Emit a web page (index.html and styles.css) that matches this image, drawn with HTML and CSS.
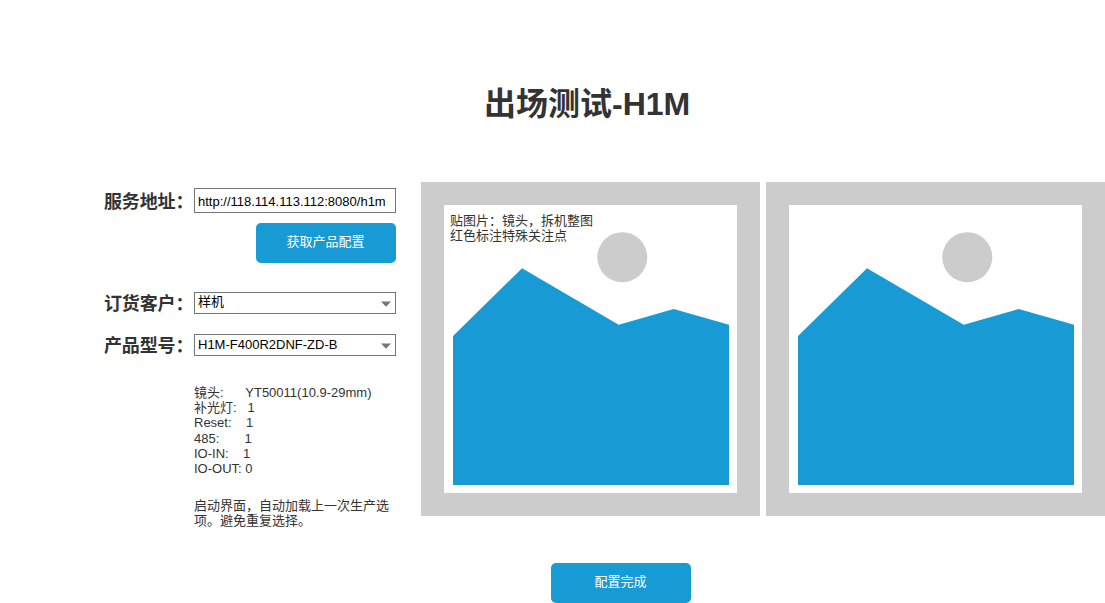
FILE: index.html
```html
<!DOCTYPE html>
<html lang="zh-CN">
<head>
<meta charset="utf-8">
<title>出场测试-H1M</title>
<link rel="stylesheet" href="styles.css">
</head>
<body>
<main class="page">
  <h1 class="title">出场测试-H1M</h1>
  <div class="content">
    <section class="form">
      <div class="field field-address">
        <label class="label" for="address">服务地址：</label>
        <input class="input" id="address" type="text" value="http://118.114.113.112:8080/h1m">
      </div>
      <button class="button fetch" type="button">获取产品配置</button>
      <div class="field field-customer">
        <span class="label">订货客户：</span>
        <div class="select"><span class="select-text">样机</span><svg class="arrow" width="10" height="6" viewBox="0 0 10 6"><path d="M0 0.5H10L5 5.8Z" fill="#767676"/></svg></div>
      </div>
      <div class="field field-model">
        <span class="label">产品型号：</span>
        <div class="select"><span class="select-text latin">H1M-F400R2DNF-ZD-B</span><svg class="arrow" width="10" height="6" viewBox="0 0 10 6"><path d="M0 0.5H10L5 5.8Z" fill="#767676"/></svg></div>
      </div>
      <div class="specs">
        <div class="spec">镜头:      YT50011(10.9-29mm)</div>
        <div class="spec">补光灯:   1</div>
        <div class="spec">Reset:    1</div>
        <div class="spec">485:       1</div>
        <div class="spec">IO-IN:    1</div>
        <div class="spec">IO-OUT: 0</div>
      </div>
      <p class="hint">启动界面，自动加载上一次生产选<br>项。避免重复选择。</p>
    </section>
    <section class="gallery">
      <div class="picture">
        <svg class="art" width="293" height="288" viewBox="0 0 293 288"><circle cx="178.3" cy="52.2" r="25" fill="#ccc"/><path d="M9 131L78 63.2L174.7 119.7L229.7 104L285 119.7V280H9Z" fill="#189bd5"/></svg>
        <p class="note">贴图片：镜头，拆机整图<br>红色标注特殊关注点</p>
      </div>
      <div class="picture">
        <svg class="art" width="293" height="288" viewBox="0 0 293 288"><circle cx="178.3" cy="52.2" r="25" fill="#ccc"/><path d="M9 131L78 63.2L174.7 119.7L229.7 104L285 119.7V280H9Z" fill="#189bd5"/></svg>
      </div>
    </section>
  </div>
  <button class="button done" type="button">配置完成</button>
</main>
</body>
</html>
```
FILE: styles.css
```css
* { box-sizing: border-box; }

body {
  margin: 0;
  background: #fff;
  color: #333;
  font: 13px/15.2px "Liberation Sans", "Noto Sans CJK SC", sans-serif;
  overflow: hidden;
}

.page {
  display: flex;
  flex-direction: column;
  height: 603px;
  padding-top: 84px;
}

.title {
  margin: 0 0 58px 484px;
  font-size: 32px;
  line-height: 40px;
  font-weight: bold;
  white-space: nowrap;
}

.content {
  display: flex;
  height: 334px;
  padding-left: 104px;
  gap: 25px;
}

.form {
  display: flex;
  flex-direction: column;
  width: 292px;
  flex: none;
  padding-top: 6px;
}

.field { display: flex; align-items: center; flex: none; }
.field-address { height: 25px; }
.field-customer { height: 22px; margin-top: 29px; }
.field-model { height: 22px; margin-top: 20px; }

.label {
  width: 90px;
  flex: none;
  padding-top: 2px;
  font-size: 18px;
  line-height: 22px;
  font-weight: bold;
  letter-spacing: -0.15px;
  white-space: nowrap;
}

.input {
  width: 202px;
  height: 25px;
  padding: 3px 3px 1px;
  border: 1px solid #767676;
  border-radius: 0;
  font: inherit;
  color: #000;
  background: #fff;
}

.select {
  display: flex;
  align-items: center;
  justify-content: space-between;
  width: 202px;
  height: 22px;
  padding: 0 4px 0 3px;
  border: 1px solid #767676;
  color: #000;
}

.select-text { padding-bottom: 2px; }
.select-text.latin { padding-bottom: 0; }
.arrow { margin-top: 2px; }

.button {
  width: 140px;
  height: 40px;
  flex: none;
  padding: 0 1px 3px 0;
  border: 0;
  border-radius: 5px;
  background: #189bd5;
  color: #fff;
  font: inherit;
}

.fetch { margin: 10px 0 0 152px; }
.done { margin: 47px 0 0 551px; }

.specs { margin: 29px 0 0 90px; flex: none; }
.spec { white-space: pre; height: 15.2px; }

.hint { margin: 22px 0 0 90px; white-space: nowrap; flex: none; }

.gallery { display: flex; gap: 6px; }

.picture {
  position: relative;
  width: 339px;
  height: 334px;
  flex: none;
  border: 23px solid #ccc;
}

.art { display: block; }

.note {
  position: absolute;
  left: 6px;
  top: 8px;
  margin: 0;
  white-space: nowrap;
}
```
